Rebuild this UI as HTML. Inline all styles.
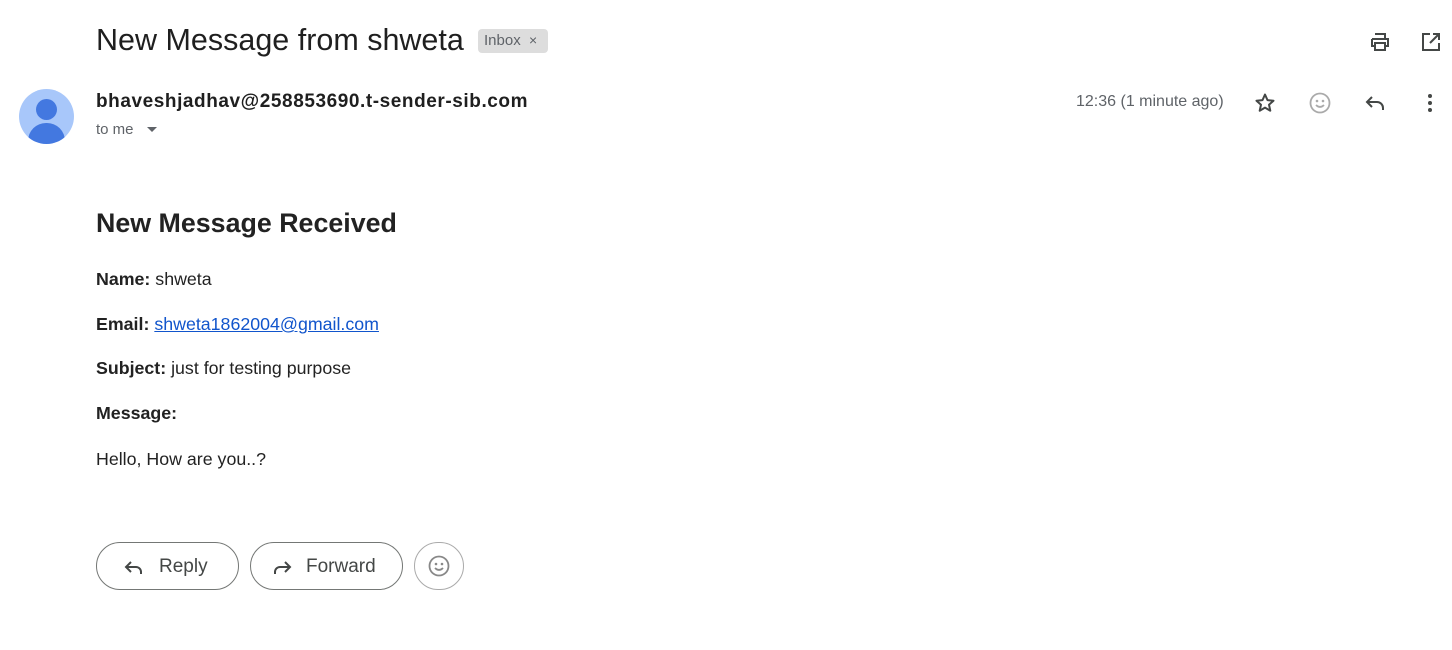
<!DOCTYPE html>
<html><head><meta charset="utf-8"><style>
body{margin:0;width:1452px;height:650px;background:#fff;font-family:"Liberation Sans",Arial,sans-serif;color:#202124;position:relative;overflow:hidden}
.a{position:absolute;white-space:nowrap}
svg{position:absolute}
.btn{position:absolute;top:542px;height:48px;border:1px solid #747775;border-radius:24px;box-sizing:border-box;font-size:19px;color:#444746}
.body p{margin:0;position:absolute;left:96px;font-size:17.8px;color:#222;white-space:nowrap}
</style></head><body>
<div class="a" style="left:96px;top:23px;font-size:30.5px;color:#1f1f1f">New Message from shweta</div>
<div class="a" style="left:478px;top:29px;height:24px;width:70px;background:#ddd;border-radius:4px;font-size:15px;color:#5f6368;line-height:23px;padding-left:6px;box-sizing:border-box">Inbox&nbsp; <span style="font-size:14px">×</span></div>
<svg style="left:1368px;top:30px" width="24" height="24" viewBox="0 0 24 24"><path d="M7 4h10v4M4 9h16v7h-3M7 16H4V9M7 13h10v7H7z" stroke="#444746" stroke-width="2" fill="none"/></svg>
<svg style="left:1419px;top:30px" width="24" height="24" viewBox="0 0 24 24"><path d="M11 4H4v16h16v-7M14 4h6v6M20 4l-9 9" stroke="#444746" stroke-width="2" fill="none"/></svg>
<div class="a" style="left:19px;top:89px;width:55px;height:55px;border-radius:50%;background:#a8c7fa;overflow:hidden"><div style="position:absolute;left:17px;top:10px;width:21px;height:21px;border-radius:50%;background:#4378e0"></div><div style="position:absolute;left:9px;top:34px;width:37px;height:30px;border-radius:18px 18px 0 0;background:#4378e0"></div></div>
<div class="a" style="left:96px;top:91px;font-size:19px;font-weight:bold;color:#1f1f1f;letter-spacing:0.57px">bhaveshjadhav@258853690.t-sender-sib.com</div>
<div class="a" style="left:96px;top:121px;font-size:15px;color:#5f6368">to me</div>
<svg style="left:146px;top:126px" width="12" height="8"><path d="M1 1h10L6 6z" fill="#5f6368"/></svg>
<div class="a" style="left:1076px;top:93px;font-size:16px;color:#5f6368">12:36 (1 minute ago)</div>
<svg style="left:1253px;top:91px" width="24" height="24" viewBox="0 0 24 24"><path d="M12 3.5l2.5 5.6 6 .6-4.5 4 1.3 6L12 16.6l-5.3 3.1 1.3-6-4.5-4 6-.6z" stroke="#444746" stroke-width="2" fill="none" stroke-linejoin="round"/></svg>
<svg style="left:1308px;top:91px" width="24" height="24" viewBox="0 0 24 24"><circle cx="12" cy="12" r="9.5" stroke="#aaa" stroke-width="1.8" fill="none"/><circle cx="9" cy="10" r="1.3" fill="#aaa"/><circle cx="15" cy="10" r="1.3" fill="#aaa"/><path d="M8 14q4 4 8 0" stroke="#aaa" stroke-width="1.8" fill="none"/></svg>
<svg style="left:1363px;top:91px" width="24" height="24" viewBox="0 0 24 24"><path d="M9 6l-5 5 5 5M4 11h10a6 6 0 0 1 6 6v2" stroke="#444746" stroke-width="2" fill="none"/></svg>
<svg style="left:1418px;top:91px" width="24" height="24" viewBox="0 0 24 24"><circle cx="12" cy="5" r="2" fill="#444746"/><circle cx="12" cy="12" r="2" fill="#444746"/><circle cx="12" cy="19" r="2" fill="#444746"/></svg>
<div class="body">
<div class="a" style="left:96px;top:208px;font-size:26.8px;font-weight:bold;color:#222">New Message Received</div>
<p style="top:269px"><b>Name:</b> shweta</p>
<p style="top:314px"><b>Email:</b> <span style="color:#1155cc;text-decoration:underline">shweta1862004@gmail.com</span></p>
<p style="top:358px"><b>Subject:</b> just for testing purpose</p>
<p style="top:403px"><b>Message:</b></p>
<p style="top:449px">Hello, How are you..?</p>
</div>
<div class="btn" style="left:96px;width:143px"><svg style="left:25px;top:12px" width="24" height="24" viewBox="0 0 24 24"><path d="M9 7l-5 5 5 5M4 12h10a5 5 0 0 1 5 5v2" stroke="#444746" stroke-width="2" fill="none"/></svg><span class="a" style="left:62px;top:13px">Reply</span></div>
<div class="btn" style="left:250px;width:153px"><svg style="left:19px;top:12px" width="24" height="24" viewBox="0 0 24 24"><path d="M15 7l5 5-5 5M20 12H10a5 5 0 0 0-5 5v2" stroke="#444746" stroke-width="2" fill="none"/></svg><span class="a" style="left:55px;top:13px">Forward</span></div>
<div class="btn" style="left:414px;width:50px;border-color:#aaa"><svg style="left:12px;top:11px" width="24" height="24" viewBox="0 0 24 24"><circle cx="12" cy="12" r="9.5" stroke="#888" stroke-width="1.8" fill="none"/><circle cx="9" cy="10" r="1.3" fill="#888"/><circle cx="15" cy="10" r="1.3" fill="#888"/><path d="M8 14q4 4 8 0" stroke="#888" stroke-width="1.8" fill="none"/></svg></div>
</body></html>
